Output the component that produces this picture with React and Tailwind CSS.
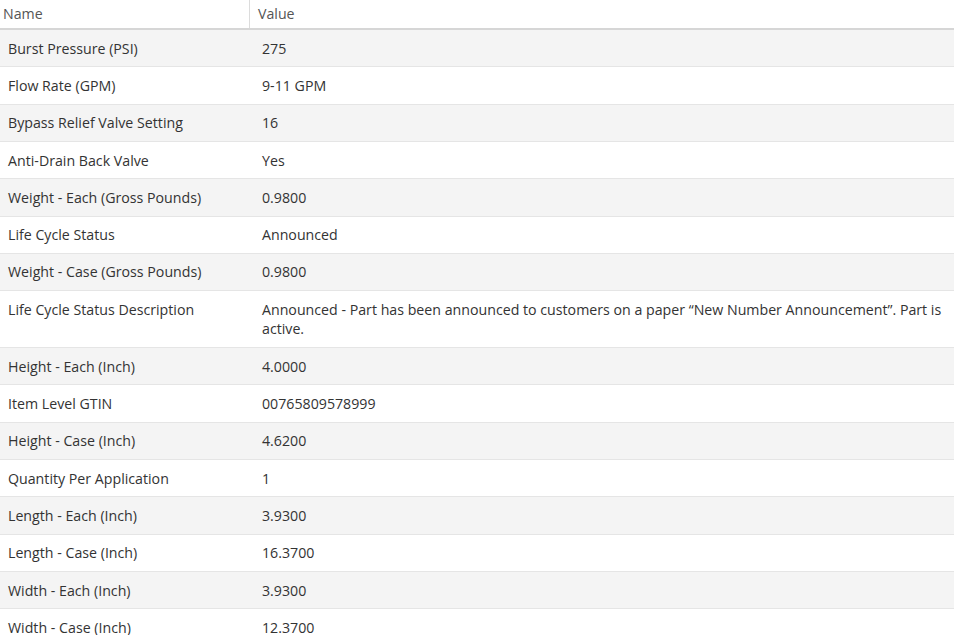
import React from 'react';

const rows = [
  ['Burst Pressure (PSI)', '275'],
  ['Flow Rate (GPM)', '9-11 GPM'],
  ['Bypass Relief Valve Setting', '16'],
  ['Anti-Drain Back Valve', 'Yes'],
  ['Weight - Each (Gross Pounds)', '0.9800'],
  ['Life Cycle Status', 'Announced'],
  ['Weight - Case (Gross Pounds)', '0.9800'],
  [
    'Life Cycle Status Description',
    'Announced - Part has been announced to customers on a paper \u201cNew Number Announcement\u201d. Part is active.',
  ],
  ['Height - Each (Inch)', '4.0000'],
  ['Item Level GTIN', '00765809578999'],
  ['Height - Case (Inch)', '4.6200'],
  ['Quantity Per Application', '1'],
  ['Length - Each (Inch)', '3.9300'],
  ['Length - Case (Inch)', '16.3700'],
  ['Width - Each (Inch)', '3.9300'],
  ['Width - Case (Inch)', '12.3700'],
];

export default function App() {
  return (
    <div
      className="w-[954px] h-[635px] overflow-hidden bg-white text-[14.2px] text-[#333]"
      style={{ fontFamily: '"Open Sans", "Liberation Sans", sans-serif' }}
    >
      <div className="grid grid-cols-[249px_1fr] h-[30px] border-b-2 border-[#d6d6d6] text-[#555]">
        <div className="pl-[3px] pt-[4px] leading-[20px]">Name</div>
        <div className="pl-2 pt-[4px] leading-[20px] border-l border-[#dcdcdc]">Value</div>
      </div>
      {rows.map(([name, value], i) => (
        <div
          key={name}
          className={`grid grid-cols-[254px_1fr] border-b border-[#e5e5e5] ${i % 2 === 0 ? 'bg-[#f4f4f4]' : 'bg-white'}`}
        >
          <div className="px-2 pt-[8.6px] pb-[8.06px] leading-[19.67px]">{name}</div>
          <div className="pl-2 pt-[8.6px] pb-[8.06px] leading-[19.67px]">{value}</div>
        </div>
      ))}
    </div>
  );
}
